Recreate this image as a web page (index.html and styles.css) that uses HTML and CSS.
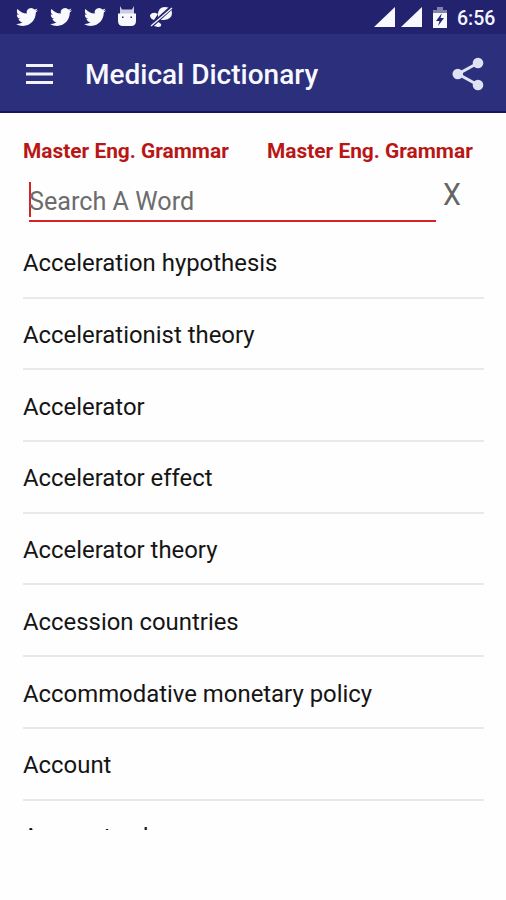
FILE: index.html
```html
<!DOCTYPE html>
<html lang="en">
<head>
<meta charset="utf-8">
<title>Medical Dictionary</title>
<link rel="stylesheet" href="styles.css">
</head>
<body>
<svg class="defs" width="0" height="0">
  <symbol id="bird" viewBox="0 0 24 24"><path d="M23.95 4.57a10 10 0 0 1-2.82.77 4.96 4.96 0 0 0 2.16-2.72c-.95.55-2 .96-3.13 1.18a4.92 4.92 0 0 0-8.38 4.48C7.69 8.09 4.07 6.13 1.64 3.16a4.82 4.82 0 0 0-.67 2.48c0 1.71.87 3.21 2.19 4.1a4.9 4.9 0 0 1-2.23-.62v.06a4.92 4.92 0 0 0 3.95 4.83 5 5 0 0 1-2.21.08 4.94 4.94 0 0 0 4.6 3.42A9.87 9.87 0 0 1 0 19.54a14 14 0 0 0 7.55 2.21c9.05 0 14-7.5 14-13.98 0-.21 0-.42-.02-.63a9.94 9.94 0 0 0 2.46-2.55z"/></symbol>
</svg>
<div class="status">
  <div class="notices">
    <svg width="22" height="22"><use href="#bird"/></svg>
    <svg width="22" height="22"><use href="#bird"/></svg>
    <svg width="22" height="22"><use href="#bird"/></svg>
    <svg class="droid" width="20" height="22" viewBox="0 0 20 22"><path d="M3 0L5 3.500h10L17 0v8H3z" opacity=".8"/><path fill-rule="evenodd" d="M1 7.500h18v7.500q0 5-5 5H6Q1 20 1 15zM5 10.500v1.500h1.500v-1.500zM13.500 10.500v1.500h1.500v-1.500z"/></svg>
    <svg class="muted" width="24" height="22" viewBox="0 0 24 22"><path d="M1 9q3-4 8-1L5 14Q1 13 1 9zM9 9q0-8 7-8 7 0 7 6 0 6-8 7L9 14zM3 16l5-1 4 3q1 3-3 3l-4-1z"/><path class="slash" d="M1.500 20.500L23 1"/><path class="stroke" d="M2 20L23 2"/></svg>
  </div>
  <div class="system">
    <svg width="21" height="20"><path d="M0 20L21 0v20z"/></svg>
    <svg width="21" height="20"><path d="M0 20L21 0v20z"/></svg>
    <svg class="battery" width="14" height="21" viewBox="0 0 14 21"><path opacity=".45" d="M0 3h4V0h6v3h4v4H0z"/><path fill-rule="evenodd" d="M0 6h14v15H0zM9 6L3 14h3.500L5 19l6-8H7.500z"/></svg>
    <span>6:56</span>
  </div>
</div>
<header class="toolbar">
  <svg class="menu" width="27" height="20"><path d="M0 0h27v3H0zM0 8.500h27v3H0zM0 17h27v3H0z"/></svg>
  <h1>Medical Dictionary</h1>
  <svg class="share" width="32" height="34" viewBox="0 0 32 34"><path d="M26 6L6 17l20 11"/><circle cx="26" cy="6" r="5.300"/><circle cx="5.800" cy="17" r="5.300"/><circle cx="26" cy="28" r="5.300"/></svg>
</header>
<main>
  <div class="links"><a>Master Eng. Grammar</a><a>Master Eng. Grammar</a></div>
  <div class="search"><div class="field"><span class="caret"></span><span class="hint">Search A Word</span></div><span class="clear">X</span></div>
  <ul class="words">
    <li>Acceleration hypothesis</li>
    <li>Accelerationist theory</li>
    <li>Accelerator</li>
    <li>Accelerator effect</li>
    <li>Accelerator theory</li>
    <li>Accession countries</li>
    <li>Accommodative monetary policy</li>
    <li>Account</li>
    <li>Account sales</li>
  </ul>
</main>
</body>
</html>
```
FILE: styles.css
```css
* { box-sizing: border-box; }
body { margin: 0; height: 900px; overflow: hidden; background: #fefefe; font-family: Roboto, sans-serif; color: #151515; }
svg { display: block; flex: none; }
.defs { position: absolute; }
.status { height: 34px; background: #22226f; display: flex; justify-content: space-between; padding: 0 11px 0 16px; color: #f4f4ff; fill: #f8f8ff; }
.notices { display: flex; gap: 12px; padding-top: 6px; }
.droid { margin-left: -1px; }
.slash { stroke: #22226f; stroke-width: 4; }
.stroke { stroke: #f8f8ff; stroke-width: 1.300; }
.system { display: flex; gap: 6px; padding-top: 7px; }
.battery { margin-left: 5px; }
.system span { font-size: 19.500px; font-weight: 500; line-height: 24px; margin-left: 4px; width: 38px; white-space: nowrap; }
.toolbar { height: 79px; background: #2c307c; border-bottom: 2px solid #151563; display: flex; align-items: center; padding: 2px 22px 0 26px; }
.menu { fill: #f1f2fc; }
h1 { margin: 2px auto 0 32px; color: #f8f8ff; font-size: 28px; font-weight: 500; line-height: 36px; white-space: nowrap; }
.share { fill: #dfe2f3; stroke: none; }
.share path { fill: none; stroke: #dfe2f3; stroke-width: 3; }
main { padding: 0 22px 0 23px; }
.links { display: flex; gap: 38px; padding-top: 25px; color: #b91616; font-size: 20.900px; font-weight: 700; line-height: 26px; white-space: nowrap; }
.links a { width: 206px; }
.search { display: flex; height: 63px; }
.field { margin: 17px 0 0 6px; width: 407px; height: 41px; border-bottom: 2px solid #d32323; display: flex; }
.caret { width: 2px; height: 35px; margin-top: 1px; background: #d32323; }
.hint { margin-left: -2px; font-size: 25.200px; line-height: 41px; color: #6c6c6c; white-space: nowrap; }
.clear { margin: 13px 0 0 7px; font-size: 31px; line-height: 36px; color: #656565; transform: scaleX(.92); transform-origin: left; }
.words { list-style: none; margin: 0; padding: 0; height: 603px; overflow: hidden; }
.words li { height: 71.700px; border-bottom: 2px solid #e9e9e9; padding-top: 20.400px; font-size: 23.900px; line-height: 32px; white-space: nowrap; }
.words li:last-child { padding-top: 20px; }
```
